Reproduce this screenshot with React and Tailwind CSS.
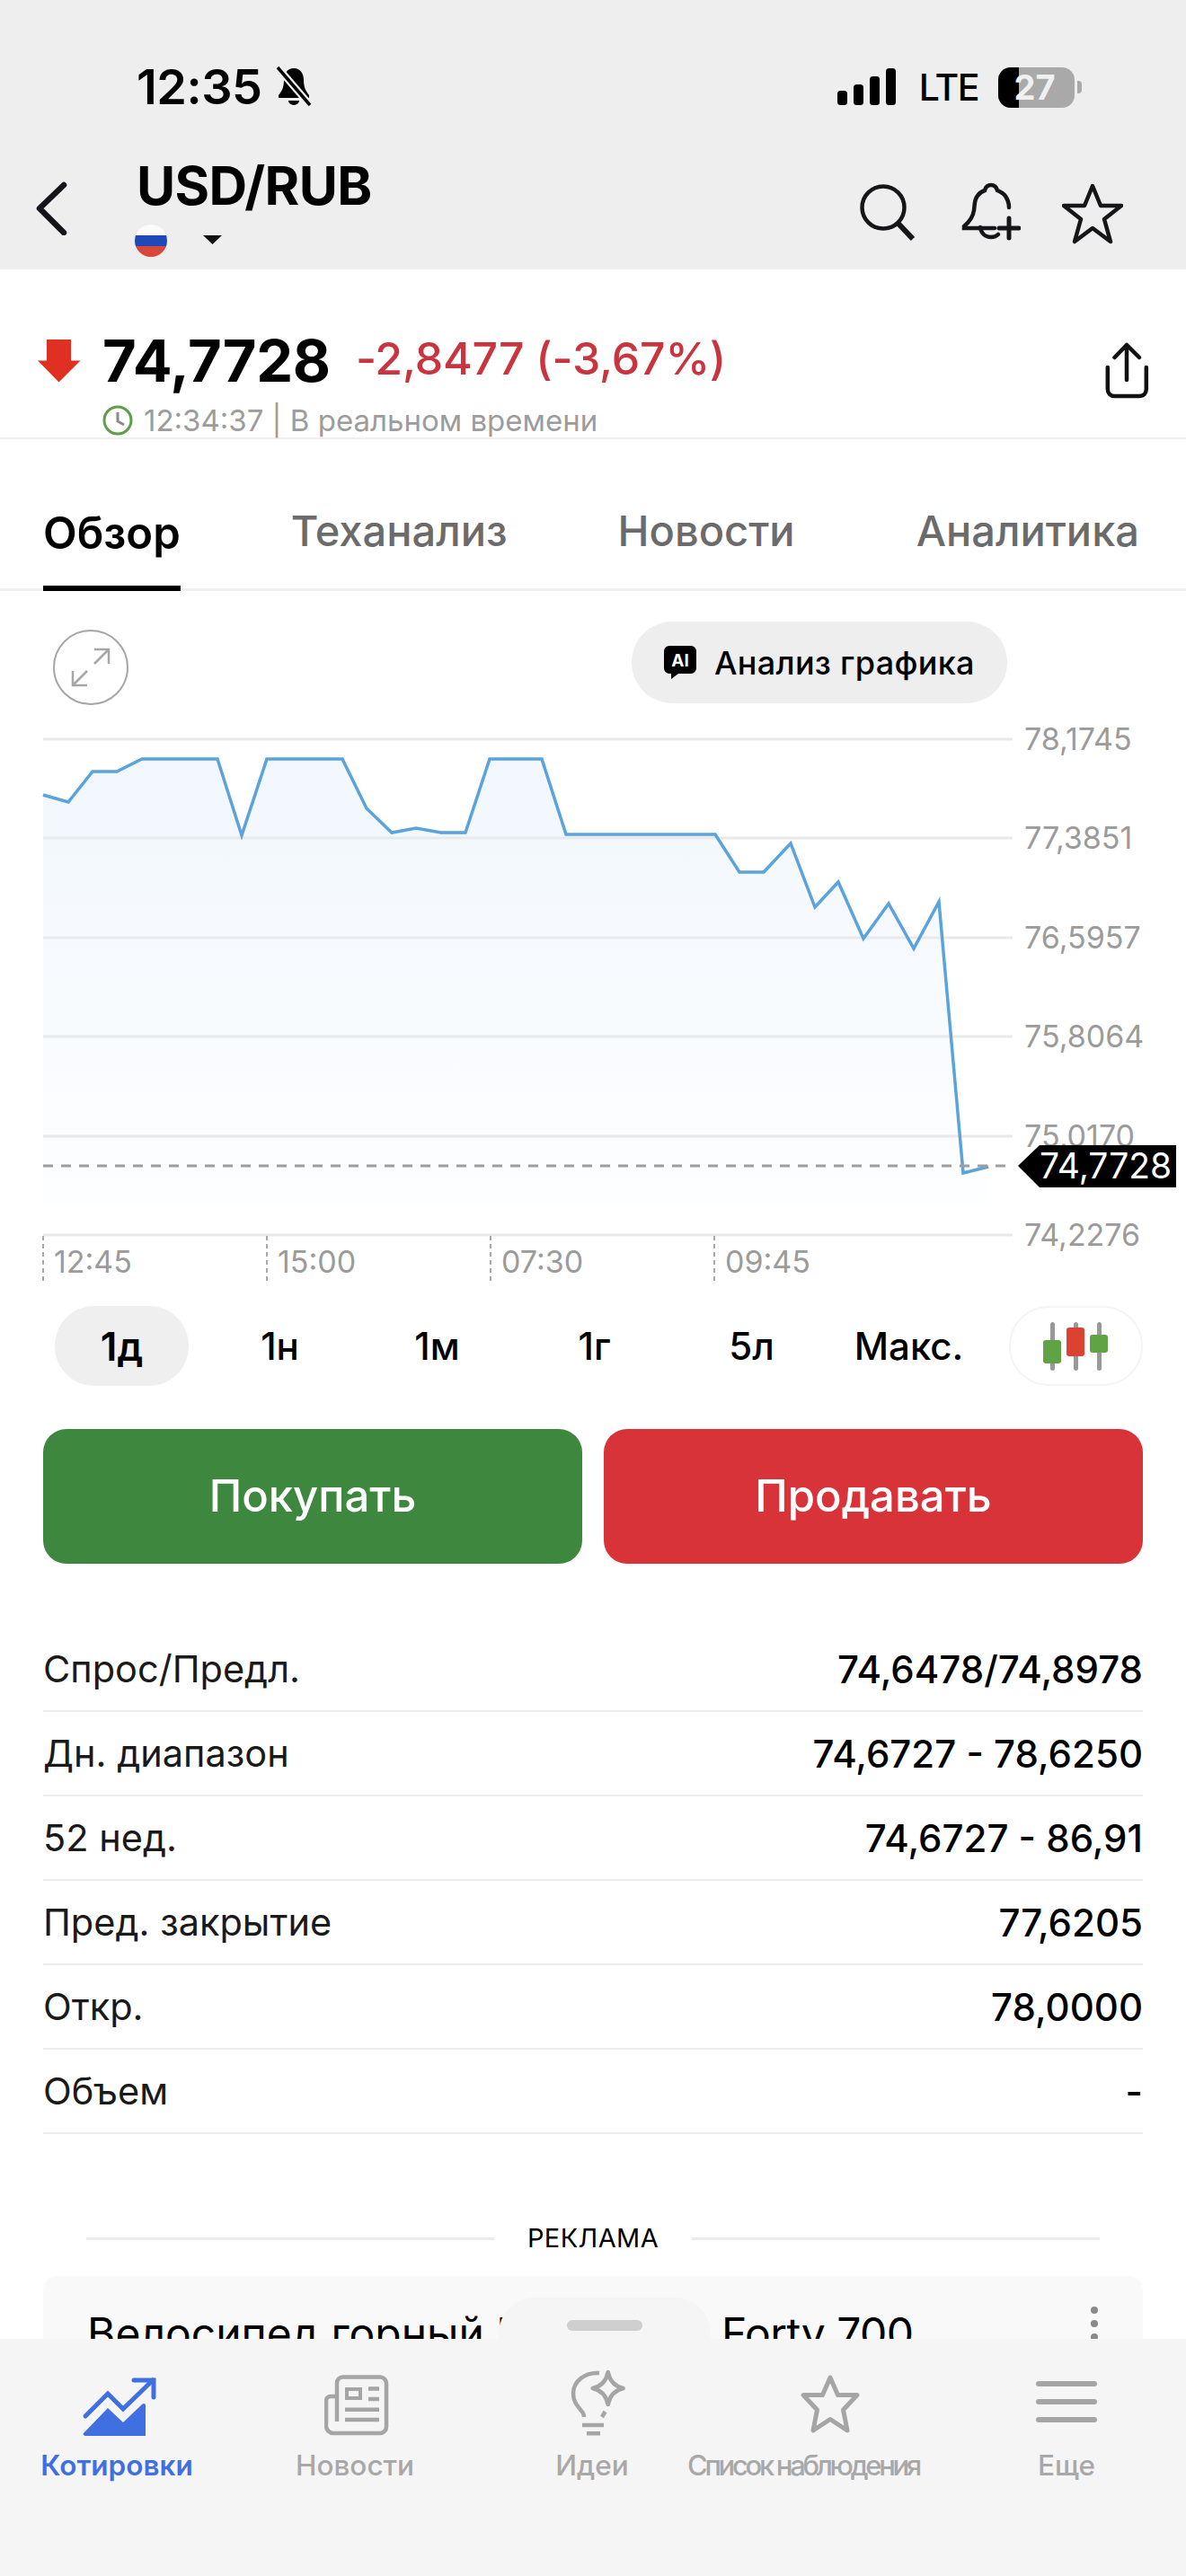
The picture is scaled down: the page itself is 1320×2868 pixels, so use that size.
import React from "react";

const linePoints = [
  [48, 885], [76, 893], [103, 859], [130, 859], [158, 845], [242, 845], [269, 930], [297, 845],
  [381, 845], [408, 900], [436, 927], [463, 922], [491, 927], [518, 927], [545, 845], [603, 845],
  [630, 929], [796, 929], [823, 971], [850, 971], [880, 939], [907, 1010], [933, 982], [961, 1045],
  [989, 1006], [1017, 1056], [1045, 1004], [1072, 1306], [1100, 1299],
];

const gridLines = [
  { y: 823, label: "78,1745" },
  { y: 933, label: "77,3851" },
  { y: 1044, label: "76,5957" },
  { y: 1154, label: "75,8064" },
  { y: 1265, label: "75,0170" },
  { y: 1375, label: "74,2276" },
];

const timeTicks = [
  { x: 48, label: "12:45" },
  { x: 297, label: "15:00" },
  { x: 546, label: "07:30" },
  { x: 795, label: "09:45" },
];

const stats = [
  ["Спрос/Предл.", "74,6478/74,8978"],
  ["Дн. диапазон", "74,6727 - 78,6250"],
  ["52 нед.", "74,6727 - 86,91"],
  ["Пред. закрытие", "77,6205"],
  ["Откр.", "78,0000"],
  ["Объем", "-"],
];

function StatusBar() {
  return (
    <div className="flex items-center justify-between h-[46px] pl-[152px] pr-[116px] mt-[74px]">
      <div className="flex items-center gap-[14px]">
        <span className="text-[54px] leading-none font-semibold tracking-[-0.5px]">12:35</span>
        <svg width="42" height="46" viewBox="0 0 42 46">
          <path d="M21 2c-8 0-11 7-11 13 0 8-2 12-6 17v3h34v-3c-4-5-6-9-6-17 0-6-3-13-11-13z" fill="#000" />
          <path d="M15 38a6 5 0 0 0 12 0z" fill="#000" />
          <path d="M3 1 39 43" stroke="#eeeeef" strokeWidth="8" />
          <path d="M3 1 39 43" stroke="#000" strokeWidth="3.5" />
        </svg>
      </div>
      <div className="flex items-center">
        <svg width="66" height="42" viewBox="0 0 66 42" fill="#000">
          <rect x="0" y="25" width="11" height="16" rx="3.5" />
          <rect x="18" y="18" width="11" height="23" rx="3.5" />
          <rect x="36" y="9" width="11" height="32" rx="3.5" />
          <rect x="54" y="0" width="11" height="41" rx="3.5" />
        </svg>
        <span className="ml-[25px] text-[41px] leading-none font-medium tracking-[-1.5px]">LTE</span>
        <div className="ml-[22px] relative w-[85px] h-[45px] rounded-[14px] bg-[#a9a9a9] overflow-hidden flex items-center justify-center">
          <div className="absolute left-0 top-0 bottom-0 w-[23px] bg-black" />
          <span className="relative text-[38px] leading-none font-bold text-[#f0f0f0] -ml-[4px]">27</span>
        </div>
        <div className="ml-[3px] w-[5px] h-[14px] rounded-r-[4px] bg-[#a9a9a9]" />
      </div>
    </div>
  );
}

function HeaderBar() {
  return (
    <div className="flex items-start mt-[50px] pl-[40px]">
      <svg className="mt-[32px]" width="36" height="60" viewBox="0 0 36 60" fill="none" stroke="#14141a" strokeWidth="6.5" strokeLinecap="round" strokeLinejoin="round">
        <path d="M31 4 4 30l27 27" />
      </svg>
      <div className="ml-[77px] flex flex-col">
        <span className="text-[59px] leading-[70px] font-bold tracking-[-0.6px] -ml-[1px] mt-[2px]">USD/RUB</span>
        <div className="flex items-start mt-[8px] -ml-[3px]">
          <svg width="36" height="36" viewBox="0 0 36 36">
            <clipPath id="flag"><circle cx="18" cy="18" r="18" /></clipPath>
            <g clipPath="url(#flag)">
              <rect width="36" height="12" fill="#fbfbfb" />
              <rect y="12" width="36" height="12" fill="#1f48b8" />
              <rect y="24" width="36" height="12" fill="#d8473a" />
            </g>
          </svg>
          <svg className="ml-[40px] mt-[12px]" width="21" height="10" viewBox="0 0 21 10">
            <path d="M0 0h21L10.5 10z" fill="#111" />
          </svg>
        </div>
      </div>
      <div className="ml-auto flex items-start pr-[70px] pt-[35px]">
        <svg width="64" height="64" viewBox="0 0 64 64" fill="none" stroke="#161618" strokeWidth="4.5">
          <circle cx="26" cy="26" r="23.5" />
          <path d="M42 43 59 61" strokeWidth="6" />
        </svg>
        <svg className="ml-[49px] -mt-[2px]" width="66" height="66" viewBox="0 0 66 66" fill="none" stroke="#161618" strokeWidth="4.5" strokeLinecap="round">
          <path d="M53 28c0-4-1-9-5-14-3-3-6-4-8-5-1-4-4-6-7-6s-6 2-7 6c-3 1-6 3-8 6-4 5-3 10-4 16-1 8-5 13-11 18v2h34" />
          <path d="M21 50c1 7 6 11 12 11 3 0 6-1 8-3" />
          <path d="M53 40v22M42 51h22" strokeWidth="5" />
        </svg>
        <svg className="ml-[46px] -mt-[1px]" width="68" height="68" viewBox="0 0 68 68" fill="none" stroke="#161618" strokeWidth="4.5" strokeLinejoin="round">
          <path d="M34 3l9 22h23L47 40l7 25-20-15-20 15 7-25L2 25h23z" />
        </svg>
      </div>
    </div>
  );
}

function PriceBlock() {
  return (
    <div className="h-[189px] border-b-2 border-[#f0f0f0]">
      <div className="flex items-center pt-[59px] pl-[42px]">
        <svg width="48" height="48" viewBox="0 0 48 48">
          <path d="M10 0h27v23.5h10.500L23.500 47.500 0 23.500h10z" fill="#e03021" />
        </svg>
        <span className="ml-[24px] text-[65px] leading-[60px] font-bold tracking-[-0.3px]">74,7728</span>
        <span className="ml-[28px] mb-[6px] text-[50px] leading-[60px] font-medium text-[#c9353f] tracking-[-0.2px]">-2,8477 (-3,67%)</span>
        <svg className="ml-auto mr-[40px] mt-[22px]" width="50" height="64" viewBox="0 0 50 64" fill="none" stroke="#111" strokeWidth="4.5" strokeLinecap="round" strokeLinejoin="round">
          <path d="M24 42V3M10.500 17 24 3l14 14" />
          <path d="M2.800 28v24c0 5 3 8 8 8h27c5 0 8-3 8-8V28" />
        </svg>
      </div>
      <div className="flex items-center pl-[114px] mt-[3px]">
        <svg width="34" height="34" viewBox="0 0 34 34" fill="none" stroke="#5d9e48" strokeWidth="3">
          <circle cx="17" cy="17" r="15" />
          <path d="M17 8v10l7 4" stroke="#8a8a8a" />
        </svg>
        <span className="ml-[12px] text-[33px] leading-[40px] text-[#9c9c9c]">12:34:37 | В реальном времени</span>
      </div>
    </div>
  );
}

function Tabs() {
  return (
    <div className="h-[169px] border-b-[3px] border-[#eeeeee] flex items-end pl-[48px] gap-[123px] whitespace-nowrap">
      <div className="h-[107px] border-b-[6px] border-black -mb-[3px] text-[49px] leading-[86px] font-semibold">Обзор</div>
      <div className="h-[107px] text-[47px] leading-[86px] font-medium text-[#6b6b6b]">Теханализ</div>
      <div className="h-[107px] text-[47px] leading-[86px] font-medium text-[#6b6b6b]">Новости</div>
      <div className="h-[107px] ml-[12px] text-[47px] leading-[86px] font-medium text-[#6b6b6b]">Аналитика</div>
    </div>
  );
}

function ChartToolbar() {
  return (
    <div className="flex items-start pl-[59px] pt-[34px] h-[138px]">
      <div className="w-[84px] h-[84px] mt-[9px] rounded-full border-2 border-[#a6a6a6] flex items-center justify-center">
        <svg width="46" height="46" viewBox="0 0 46 46" fill="none" stroke="#a6a6a6" strokeWidth="2.5">
          <path d="M27 3h16v16M43 3 27 19M3 27v16h16M3 43l16-16" />
        </svg>
      </div>
      <div className="ml-[560px] w-[418px] h-[91px] rounded-[46px] bg-[#eeeeef] flex items-center pl-[36px]">
        <svg width="36" height="37" viewBox="0 0 36 37">
          <path d="M6 0h24a6 6 0 0 1 6 6v19a6 6 0 0 1-6 6H16l-8 6v-6H6a6 6 0 0 1-6-6V6a6 6 0 0 1 6-6z" fill="#000" />
          <text x="18" y="23" textAnchor="middle" fill="#fff" fontSize="19" fontWeight="700" fontFamily="Inter, sans-serif">AI</text>
        </svg>
        <span className="ml-[20px] text-[36px] leading-none font-medium tracking-[0.3px]">Анализ графика</span>
      </div>
    </div>
  );
}

function Chart() {
  const line = linePoints.map(([x, y]) => `${x},${y}`).join(" ");
  const area = `${line} 1100,1340 48,1340`;
  return (
    <svg className="block" width="1320" height="640" viewBox="0 796 1320 640" fontFamily="Inter, sans-serif">
      <defs>
        <linearGradient id="areaFill" x1="0" y1="0" x2="0" y2="1">
          <stop offset="0" stopColor="#f1f7fd" />
          <stop offset="1" stopColor="#fdfeff" />
        </linearGradient>
      </defs>
      <polygon points={area} fill="url(#areaFill)" />
      {gridLines.map((g) => (
        <g key={g.label}>
          <rect x="48" y={g.y - 1.5} width="1079" height="3" fill="#e9e9ec" />
          <text x="1140" y={g.y + 12} fontSize="34" fill="#9b9b9b">{g.label}</text>
        </g>
      ))}
      {timeTicks.map((t) => (
        <g key={t.label}>
          <line x1={t.x} x2={t.x} y1="1376" y2="1428" stroke="#a8a8a8" strokeWidth="2" strokeDasharray="5 4" />
          <text x={t.x + 12} y="1417" fontSize="34" fill="#9b9b9b">{t.label}</text>
        </g>
      ))}
      <polyline points={line} fill="none" stroke="#5aa3dc" strokeWidth="3.5" strokeLinejoin="miter" />
      <line x1="48" x2="1122" y1="1298" y2="1298" stroke="#9e9e9e" strokeWidth="3" strokeDasharray="11 9" />
      <polygon points="1133,1298 1157,1275 1309,1275 1309,1322 1157,1322" fill="#000" />
      <text x="1157" y="1312" fontSize="39" fill="#fff">74,7728</text>
    </svg>
  );
}

function RangeRow() {
  const ranges = ["1н", "1м", "1г", "5л", "Макс."];
  return (
    <div className="flex items-center h-[89px] mt-[18px] pl-[61px]">
      <div className="w-[149px] h-[89px] rounded-[44px] bg-[#efeff0] flex items-center justify-center text-[44px] font-semibold">1д</div>
      <div className="flex text-[42px] font-medium ml-[14px]">
        {ranges.map((label) => (
          <div key={label} className="w-[175px] text-center">{label}</div>
        ))}
      </div>
      <div className="ml-[24px] w-[149px] h-[89px] rounded-[44px] border-2 border-[#f4f4f4] flex items-center justify-center">
        <svg width="74" height="54" viewBox="0 0 74 54">
          <rect x="8" y="0" width="5" height="54" rx="2.5" fill="#999" />
          <rect x="34" y="0" width="5" height="54" rx="2.5" fill="#999" />
          <rect x="60" y="0" width="5" height="54" rx="2.5" fill="#999" />
          <rect x="0" y="20" width="20" height="26" rx="3" fill="#60a344" />
          <rect x="26" y="6" width="20" height="32" rx="3" fill="#dc4231" />
          <rect x="52" y="14" width="20" height="20" rx="3" fill="#60a344" />
        </svg>
      </div>
    </div>
  );
}

function TradeButtons() {
  return (
    <div className="flex gap-[24px] px-[48px] mt-[48px]">
      <div className="flex-1 h-[150px] rounded-[26px] bg-[#3e873f] text-white text-[49px] font-medium flex items-center justify-center">Покупать</div>
      <div className="flex-1 h-[150px] rounded-[26px] bg-[#d73339] text-white text-[49px] font-medium flex items-center justify-center">Продавать</div>
    </div>
  );
}

function StatsTable() {
  return (
    <div className="mt-[71px] px-[48px]">
      {stats.map(([label, value]) => (
        <div key={label} className="h-[94px] border-b-2 border-[#ececec] flex items-center justify-between">
          <span className="text-[41.5px] text-[#1a1a1a]">{label}</span>
          <span className="text-[42px] font-medium">{value}</span>
        </div>
      ))}
    </div>
  );
}

function AdBlock() {
  return (
    <div>
      <div className="mt-[100px] flex items-center px-[96px]">
        <div className="flex-1 h-[3px] bg-[#ececec]" />
        <span className="mx-[37px] text-[29px] leading-[32px] tracking-[0.4px]">РЕКЛАМА</span>
        <div className="flex-1 h-[3px] bg-[#ececec]" />
      </div>
      <div className="relative mt-[26px] mx-[48px] h-[200px] rounded-t-[16px] bg-[#f9f9fa] pt-[36px] pl-[49px] text-[48px] leading-[56px] whitespace-nowrap">
        <span>Велосипед горный К</span>
        <span className="absolute left-[755px] top-[36px] tracking-[-0.5px]">Forty 700</span>
        <div className="absolute right-[50px] top-[34px] flex flex-col gap-[7px]">
          <div className="w-[8px] h-[8px] rounded-full bg-[#8a8a8a]" />
          <div className="w-[8px] h-[8px] rounded-full bg-[#8a8a8a]" />
          <div className="w-[8px] h-[8px] rounded-full bg-[#8a8a8a]" />
        </div>
      </div>
    </div>
  );
}

function NavIcon({ name }) {
  if (name === "quotes") {
    return (
      <svg width="84" height="70" viewBox="0 0 84 70">
        <path d="M5 45 30 20l17 17L80 5" fill="none" stroke="#3f6fe0" strokeWidth="5" strokeLinecap="round" />
        <path d="M59 5h22v19" fill="none" stroke="#3f6fe0" strokeWidth="5" strokeLinecap="round" />
        <path d="M3 64 30 36l17 16 21-20c2-2 4-1 4 1v34H6c-3 0-4-2-3-3z" fill="#3f6fe0" />
      </svg>
    );
  }
  if (name === "news") {
    return (
      <svg width="72" height="68" viewBox="0 0 72 68" fill="none" stroke="#a5a5a5" strokeWidth="4.500">
        <path d="M14 52V9a6.500 6.500 0 0 1 6.500-6.500H62a7 7 0 0 1 7 7V58a7 7 0 0 1-7 7H10a8 8 0 0 1-8-8V29a5 5 0 0 1 5-5h7" />
        <rect x="25" y="16" width="15" height="10" strokeWidth="4" />
        <path d="M49 15.500h12M49 27h12M23 38.700h38M23 50h38" />
      </svg>
    );
  }
  if (name === "ideas") {
    return (
      <svg width="64" height="76" viewBox="0 0 64 76" fill="none" stroke="#a5a5a5" strokeWidth="4.500">
        <path d="M33 4C17 3 4 13 4 27c0 9 5 14 9 19 2 2 3 4 3 7" />
        <path d="M39.500 47 36 53M14 62h24M19 71.300h15" />
        <path d="M42.700 3c2 10 8 16 17 18-9 2-15 8-17 18-2-10-8-16-17-18 9-2 15-8 17-18z" strokeLinejoin="round" />
      </svg>
    );
  }
  if (name === "star") {
    return (
      <svg width="66" height="66" viewBox="0 0 66 66" fill="none" stroke="#a5a5a5" strokeWidth="5" strokeLinejoin="round">
        <path d="M33 4l8.500 19.500H63L47.500 40 52 63 33 50.500 14 63l4.500-23L3 23.500h21.500z" />
      </svg>
    );
  }
  return (
    <svg width="68" height="50" viewBox="0 0 68 50" fill="#a5a5a5">
      <rect y="0" width="68" height="6" rx="3" />
      <rect y="20" width="68" height="6" rx="3" />
      <rect y="40" width="68" height="6" rx="3" />
    </svg>
  );
}

function BottomNav() {
  return (
    <div className="relative h-[264px] bg-[#f5f5f6]">
      <div className="absolute left-[555px] -top-[46px] w-[236px] h-[46px] bg-[#f5f5f6] rounded-t-[40px] flex justify-center pt-[25px]">
        <div className="w-[84px] h-[12px] rounded-full bg-[#cfcfcf]" />
      </div>
      <div className="grid grid-cols-[260px_270px_258px_212px_374px] pt-[34px] font-medium text-[31.5px] leading-[36px] text-[#a8a8a8]">
        <div className="flex flex-col items-center text-[#3f6fe0] font-semibold">
          <div className="h-[74px] pt-[7px] ml-[4px]"><NavIcon name="quotes" /></div>
          <span className="mt-[15px]">Котировки</span>
        </div>
        <div className="flex flex-col items-center">
          <div className="h-[74px] pt-[6px] ml-[4px]"><NavIcon name="news" /></div>
          <span className="mt-[15px]">Новости</span>
        </div>
        <div className="flex flex-col items-center">
          <div className="h-[74px] ml-[14px]"><NavIcon name="ideas" /></div>
          <span className="mt-[15px]">Идеи</span>
        </div>
        <div className="flex flex-col items-center">
          <div className="h-[74px] pt-[5px] ml-[60px]"><NavIcon name="star" /></div>
          <span className="mt-[15px] whitespace-nowrap text-[31px] tracking-[-3.3px]">Список наблюдения</span>
        </div>
        <div className="flex flex-col items-center">
          <div className="h-[74px] pt-[13px]"><NavIcon name="menu" /></div>
          <span className="mt-[15px]">Еще</span>
        </div>
      </div>
    </div>
  );
}

export default function App() {
  return (
    <div className="w-[1320px] h-[2868px] overflow-hidden bg-white text-black flex flex-col font-['Inter',sans-serif]">
      <div className="h-[300px] shrink-0 bg-[#eeeeef] overflow-hidden">
        <StatusBar />
        <HeaderBar />
      </div>
      <div className="flex-1 overflow-hidden">
        <PriceBlock />
        <Tabs />
        <ChartToolbar />
        <Chart />
        <RangeRow />
        <TradeButtons />
        <StatsTable />
        <AdBlock />
      </div>
      <BottomNav />
    </div>
  );
}
